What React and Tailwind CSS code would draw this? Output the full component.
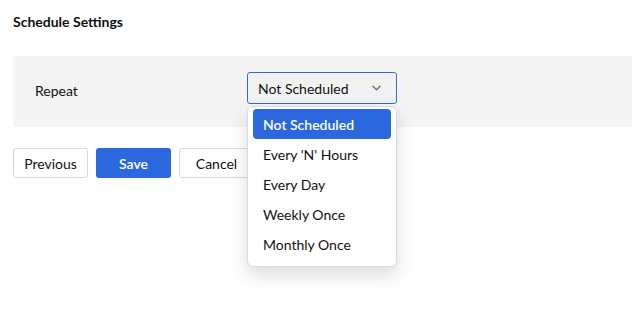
import React, { useState } from 'react';

const options = ["Not Scheduled", "Every 'N' Hours", "Every Day", "Weekly Once", "Monthly Once"];

const Chevron = () => (
    <svg width="9" height="6" viewBox="0 0 9 6" fill="none">
        <path d="M1 1.2l3.5 3.5 3.5-3.5" stroke="#6b6b6b" strokeWidth="1.3" strokeLinecap="round" strokeLinejoin="round" />
    </svg>
);

const App = () => {
    const [selected, setSelected] = useState(options[0]);

    return (
        <div className="min-h-screen bg-white pl-[13px] pt-[13px] text-[14px] text-[#111]" style={{ fontFamily: 'Lato, "Open Sans", sans-serif' }}>
            <h2 className="font-bold text-[14px] leading-[18px]">Schedule Settings</h2>

            {/* Settings panel */}
            <div className="mt-[25px] bg-[#f4f4f4] pl-[22px] pt-4 pb-[23px] flex items-center">
                <div className="w-[212px] pt-[4px]">Repeat</div>
                <div className="relative">
                    <button className="w-[150px] h-[32px] rounded-[3px] border border-[#2d6ae0] bg-[#f1f1f1] pl-[10px] pr-[15px] flex items-center justify-between">
                        <span>{selected}</span>
                        <Chevron />
                    </button>

                    {/* Dropdown menu */}
                    <div className="absolute left-0 top-[34px] z-10 w-[150px] rounded-[6px] border border-[#d5dbef] bg-white px-[5px] pt-[2px] pb-[7px] shadow-[0_8px_18px_rgba(0,0,0,0.14)]">
                        {options.map(opt => (
                            <div
                                key={opt}
                                onClick={() => setSelected(opt)}
                                className={`h-[30px] flex items-center pl-[10px] rounded-[4px] ${opt === selected ? 'bg-[#2b68de] text-white font-semibold' : 'text-[#111]'}`}>
                                {opt}
                            </div>
                        ))}
                    </div>
                </div>
            </div>

            {/* Actions */}
            <div className="mt-[21px] flex gap-2">
                <button className="w-[75px] h-[30px] rounded-[3px] border border-[#d9d9d9] bg-white">Previous</button>
                <button className="w-[75px] h-[30px] rounded-[3px] bg-[#2b68de] text-white font-semibold">Save</button>
                <button className="w-[75px] h-[30px] rounded-[3px] border border-[#d9d9d9] bg-white">Cancel</button>
            </div>
        </div>
    );
};

export default App;
